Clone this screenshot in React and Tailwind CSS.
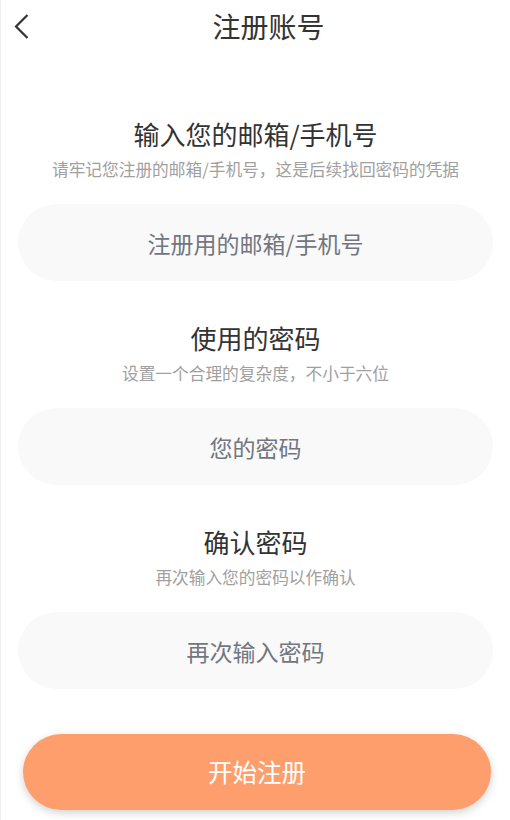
const sections = [
  {
    title: "输入您的邮箱/手机号",
    hint: "请牢记您注册的邮箱/手机号，这是后续找回密码的凭据",
    placeholder: "注册用的邮箱/手机号",
    type: "text",
  },
  {
    title: "使用的密码",
    hint: "设置一个合理的复杂度，不小于六位",
    placeholder: "您的密码",
    type: "password",
  },
  {
    title: "确认密码",
    hint: "再次输入您的密码以作确认",
    placeholder: "再次输入密码",
    type: "password",
  },
];

function App() {
  return (
    <div className="min-h-[820px] border-l border-[#eeeeee] bg-white font-['Noto_Sans_CJK_SC','Noto_Sans',sans-serif]">
      <header className="relative flex h-[52px] items-center justify-center pl-[26px]">
        <button className="absolute left-[8px] top-[9px] p-1" type="button">
          <svg width="18" height="28" viewBox="0 0 18 28" fill="none">
            <path d="M14.5 2 L3 13.5 L14.5 25" stroke="#333333" strokeWidth="2.2" />
          </svg>
        </button>
        <h1 className="text-[28px] leading-[34px] text-[#333333]">注册账号</h1>
      </header>

      <form className="px-[17px] pt-[65px]">
        {sections.map((section, index) => (
          <div className={index > 0 ? "mt-[40px]" : ""} key={section.title}>
            <h2 className="text-center text-[26px] leading-[34px] text-[#333333]">
              {section.title}
            </h2>
            <p className="mt-[8px] text-center text-[16.7px] leading-[20px] text-[#a0a0a0]">
              {section.hint}
            </p>
            <input
              className="mt-[25px] h-[77px] w-full rounded-full bg-[#f9f9f9] text-center text-[23px] text-[#333333] outline-none placeholder:text-[#717680]"
              placeholder={section.placeholder}
              type={section.type}
            />
          </div>
        ))}

        <button
          className="mx-[5px] mt-[45px] flex h-[76px] w-[468px] items-center justify-center rounded-full bg-[#ff9e6d] text-[24.5px] text-white shadow-[0_3px_8px_rgba(0,0,0,0.18)]"
          type="button"
        >
          开始注册
        </button>
      </form>
    </div>
  );
}

export default App;
